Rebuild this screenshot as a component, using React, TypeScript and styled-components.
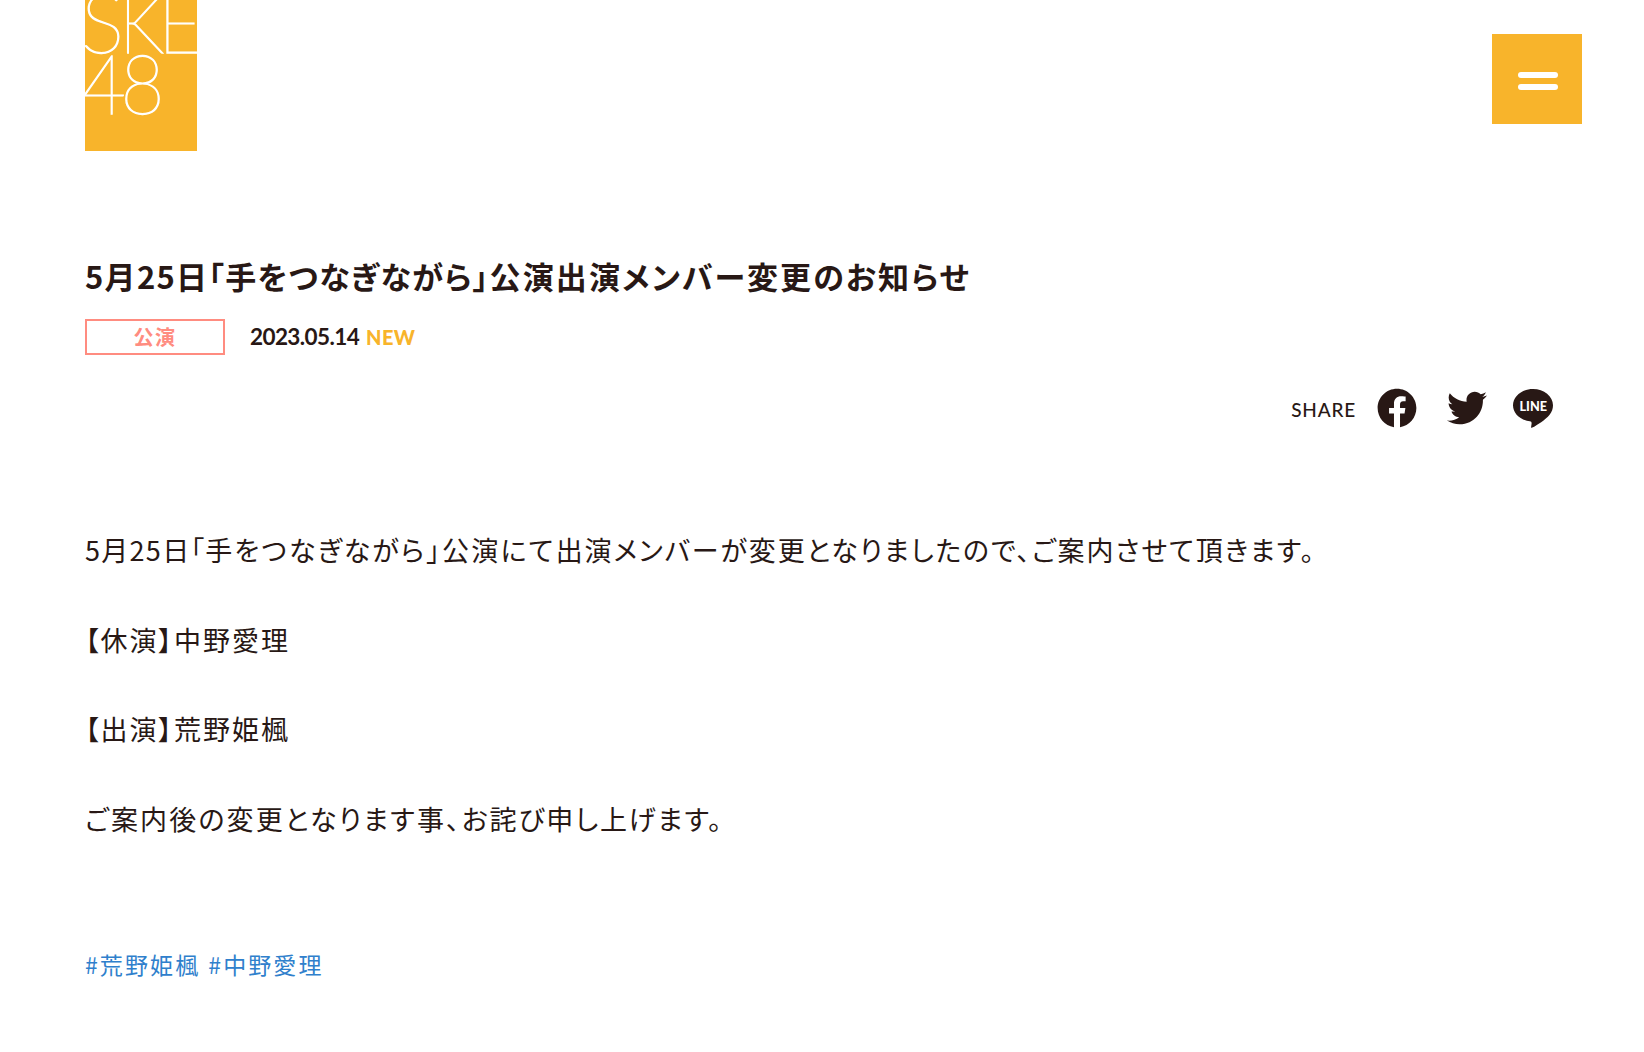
import React from "react";
import styled, { createGlobalStyle } from "styled-components";
import { FaFacebook, FaTwitter } from "react-icons/fa";

type TextPropsType = {
    $spacing: number
}

const tags = ["#荒野姫楓", "#中野愛理"];

const title = [
    { text: "5月25日「", spacing: 1.3 },
    { text: "手をつなぎながら」", spacing: 1.3 },
    { text: "公演出演メンバー変更のお知らせ", spacing: 2.1 },
];

const paragraphs = [
    [
        { text: "5月25日「", spacing: 1.3 },
        { text: "手をつなぎながら」", spacing: 2.1 },
        { text: "公演にて", spacing: 2.2 },
        { text: "出演メンバーが変更となりましたので、ご案内させて頂きます。", spacing: 1.85 },
    ],
    [{ text: "【休演】中野愛理", spacing: 2 }],
    [{ text: "【出演】荒野姫楓", spacing: 2 }],
    [
        { text: "ご案内後の変更となります事、", spacing: 2.15 },
        { text: "お詫び申し上げます。", spacing: 1.9 },
    ],
];

function Logo() {
    return (
        <LogoStyled href="#" aria-label="SKE48">
            <svg width="112" height="151" viewBox="0 0 112 151">
                <LogoLetter x="-4" y="53" textLength="43" lengthAdjust="spacingAndGlyphs">S</LogoLetter>
                <LogoLetter x="34" y="53" textLength="45" lengthAdjust="spacingAndGlyphs">K</LogoLetter>
                <LogoLetter x="73" y="53" textLength="45" lengthAdjust="spacingAndGlyphs">E</LogoLetter>
                <LogoLetter x="-3" y="114" textLength="44" lengthAdjust="spacingAndGlyphs">4</LogoLetter>
                <LogoLetter x="35.500" y="114" textLength="44" lengthAdjust="spacingAndGlyphs">8</LogoLetter>
            </svg>
        </LogoStyled>
    )
}

function LineIcon() {
    return (
        <svg width="40" height="39" viewBox="0 0 40 39">
            <path d="M20 0C9 0 0 7.300 0 16.300C0 24.400 7.100 31.100 16.800 32.300C18.500 32.600 18.800 33.400 18.500 35.200L18.100 38C18 38.800 18.500 39 19.300 38.600C24 36.300 32.500 30.700 36.600 25.700C38.900 23 40 19.800 40 16.300C40 7.300 31 0 20 0Z" fill="currentColor" />
            <LineText x="6.500" y="21.700" textLength="27.500" lengthAdjust="spacingAndGlyphs">LINE</LineText>
        </svg>
    )
}

export default function App() {
    return (
        <PageStyled>
            <GlobalStyle />
            <HeaderStyled>
                <Logo />
                <MenuButtonStyled aria-label="menu">
                    <MenuBarStyled />
                    <MenuBarStyled />
                </MenuButtonStyled>
            </HeaderStyled>
            <ArticleStyled>
                <TitleStyled>
                    {title.map((run) => (
                        <RunStyled key={run.text} $spacing={run.spacing}>{run.text}</RunStyled>
                    ))}
                </TitleStyled>
                <MetaStyled>
                    <CategoryStyled>公演</CategoryStyled>
                    <DateStyled>2023.05.14</DateStyled>
                    <NewStyled>NEW</NewStyled>
                </MetaStyled>
                <ShareStyled>
                    <ShareLabelStyled>SHARE</ShareLabelStyled>
                    <ShareLinkStyled href="#" aria-label="Facebook"><FaFacebook size={40} /></ShareLinkStyled>
                    <ShareLinkStyled href="#" aria-label="Twitter"><FaTwitter size={40} /></ShareLinkStyled>
                    <ShareLinkStyled href="#" aria-label="LINE"><LineIcon /></ShareLinkStyled>
                </ShareStyled>
                <BodyStyled>
                    {paragraphs.map((runs) => (
                        <ParagraphStyled key={runs[0].text}>
                            {runs.map((run) => (
                                <RunStyled key={run.text} $spacing={run.spacing}>{run.text}</RunStyled>
                            ))}
                        </ParagraphStyled>
                    ))}
                </BodyStyled>
                <TagsStyled>
                    {tags.map((tag) => (
                        <TagStyled href="#" key={tag}>{tag}</TagStyled>
                    ))}
                </TagsStyled>
            </ArticleStyled>
        </PageStyled>
    )
}

const GlobalStyle = createGlobalStyle`
  * {
    box-sizing: border-box;
  }
  body {
    margin: 0;
    background: #fff;
    color: #281815;
    font-family: "Noto Sans CJK JP", sans-serif;
    font-feature-settings: "palt";
  }
`

const PageStyled = styled.div`
  height: 1052px;
  overflow: hidden;
`

const HeaderStyled = styled.header`
  display: flex;
  justify-content: space-between;
  align-items: flex-start;
  height: 151px;
  padding: 0 62px 0 85px;
`

const LogoStyled = styled.a`
  width: 112px;
  height: 151px;
  background: #f8b42b;

  svg {
    display: block;
  }
`

const LogoLetter = styled.text`
  font-family: "Lato", sans-serif;
  font-weight: 100;
  font-size: 82px;
  fill: #fff;
  stroke: #fff;
  stroke-width: 1.300px;
`

const MenuButtonStyled = styled.button`
  display: flex;
  flex-direction: column;
  gap: 6px;
  width: 90px;
  height: 90px;
  margin-top: 34px;
  padding: 38px 0 0 26px;
  border: 0;
  background: #f8b42b;
`

const MenuBarStyled = styled.span`
  width: 40px;
  height: 6px;
  border-radius: 3px;
  background: #fff;
`

const ArticleStyled = styled.article`
  padding: 100px 85px 0;
`

const RunStyled = styled.span<TextPropsType>`
  letter-spacing: ${(props) => props.$spacing}px;
`

const TitleStyled = styled.h1`
  margin: 0;
  font-weight: 700;
  font-size: 31px;
  line-height: 50px;
  white-space: nowrap;
`

const MetaStyled = styled.div`
  display: flex;
  align-items: center;
  height: 36px;
  margin-top: 18px;
`

const CategoryStyled = styled.span`
  width: 140px;
  height: 36px;
  border: 2px solid #ff8c80;
  color: #ff8c80;
  font-weight: 700;
  font-size: 20px;
  line-height: 32px;
  letter-spacing: 1.500px;
  text-align: center;
`

const DateStyled = styled.time`
  margin: -2px 0 0 25px;
  font-family: "Lato", sans-serif;
  font-weight: 700;
  font-size: 22.500px;
  letter-spacing: -0.600px;
`

const NewStyled = styled.span`
  margin-left: 7px;
  color: #f8b42b;
  font-family: "Lato", sans-serif;
  font-weight: 900;
  font-size: 20px;
  letter-spacing: 0.400px;
`

const ShareStyled = styled.div`
  display: flex;
  justify-content: flex-end;
  align-items: center;
  height: 40px;
  margin-top: 33px;
  padding-right: 6px;
`

const ShareLabelStyled = styled.span`
  margin: 3px -9px 0 0;
  font-family: "Lato", sans-serif;
  font-weight: 500;
  font-size: 19px;
  letter-spacing: 0.800px;
`

const ShareLinkStyled = styled.a`
  margin-left: 30px;
  color: #281815;

  &:last-child {
    margin-left: 26px;
  }

  svg {
    display: block;
  }
`

const LineText = styled.text`
  font-family: "Lato", sans-serif;
  font-weight: 900;
  font-size: 14px;
  fill: #fff;
`

const BodyStyled = styled.div`
  display: flex;
  flex-direction: column;
  gap: 44.700px;
  margin-top: 99px;
`

const ParagraphStyled = styled.p`
  margin: 0;
  font-size: 27px;
  line-height: 45px;
  white-space: nowrap;
`

const TagsStyled = styled.div`
  display: flex;
  gap: 8px;
  margin-top: 105px;
`

const TagStyled = styled.a`
  color: #2f80cc;
  font-size: 23px;
  line-height: 36px;
  letter-spacing: 2.100px;
  text-decoration: none;
`
